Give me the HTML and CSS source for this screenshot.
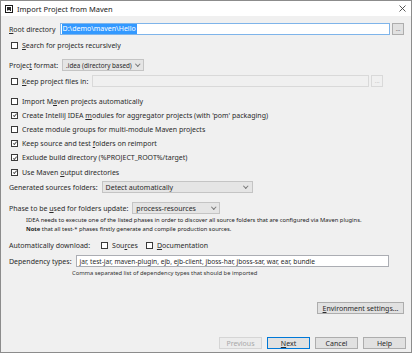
FILE: index.html
```html
<!DOCTYPE html>
<html>
<head>
  <meta charset="UTF-8">
  <title>Import Project from Maven</title>
  <link rel="stylesheet" href="styles.css">
</head>
<body>
  <div class="dialog">
    <div class="titlebar">
      <svg class="app-icon" width="8" height="8" viewBox="0 0 8 8">
        <rect x="0" y="0" width="8" height="8" fill="#1a1a1a"/>
        <rect x="1" y="1" width="6" height="6" fill="#fff"/>
        <rect x="2" y="2" width="4" height="4" fill="#2b2b2b"/>
        <rect x="2.5" y="5" width="2.5" height="0.8" fill="#fff"/>
      </svg>
      <span class="title">Import Project from Maven</span>
      <svg class="close" width="7" height="7" viewBox="0 0 7 7">
        <path d="M0.5 0.5 L6.5 6.5 M6.5 0.5 L0.5 6.5" stroke="#444" stroke-width="0.9"/>
      </svg>
    </div>

    <div class="content">
      <div class="row r-root">
        <span class="label"><u>R</u>oot directory</span>
        <div class="input focus"><span class="sel">D:\demo\maven\Hello</span></div>
        <div class="browse">...</div>
      </div>

      <div class="row r-search">
        <span class="cb"></span><span><u>S</u>earch for projects recursively</span>
      </div>

      <div class="row r-format">
        <span class="label">Projec<u>t</u> format:</span>
        <div class="select fmt">.idea (directory based)<span class="arrow"></span></div>
      </div>

      <div class="row r-keep">
        <span class="cb"></span><span><u>K</u>eep project files in:</span>
        <div class="input disabled keep-in"></div>
        <div class="browse disabled">...</div>
      </div>

      <div class="checks">
        <div class="row"><span class="cb"></span><span>Import M<u>a</u>ven projects automatically</span></div>
        <div class="row"><span class="cb on"></span><span>Create IntelliJ IDEA <u>m</u>odules for aggregator projects (with 'pom' packaging)</span></div>
        <div class="row"><span class="cb"></span><span>Create module groups for multi-module Maven projects</span></div>
        <div class="row"><span class="cb on"></span><span>Keep source and test <u>f</u>olders on reimport</span></div>
        <div class="row"><span class="cb on"></span><span>Exclude build directory (%PROJECT_ROOT%/target)</span></div>
        <div class="row"><span class="cb on"></span><span>Use Maven <u>o</u>utput directories</span></div>
      </div>

      <div class="row r-gen">
        <span class="label">Generated sources folders:</span>
        <div class="select gen">Detect automatically<span class="arrow"></span></div>
      </div>

      <div class="row r-phase">
        <span class="label">Phase to be <u>u</u>sed for folders update:</span>
        <div class="select phase">process-resources<span class="arrow"></span></div>
      </div>

      <div class="hint">
        <div>IDEA needs to execute one of the listed phases in order to discover all source folders that are configured via Maven plugins.</div>
        <div><b>Note</b> that all test-* phases firstly generate and compile production sources.</div>
      </div>

      <div class="row r-auto">
        <span class="label">Automatically download:</span>
        <span class="cb"></span><span class="opt">Sou<u>r</u>ces</span>
        <span class="cb"></span><span><u>D</u>ocumentation</span>
      </div>

      <div class="row r-dep">
        <span class="label">Dependency types:</span>
        <div class="input dep">jar, test-jar, maven-plugin, ejb, ejb-client, jboss-har, jboss-sar, war, ear, bundle</div>
      </div>

      <div class="dep-hint">Comma separated list of dependency types that should be imported</div>

      <div class="env-row">
        <div class="btn env"><u>E</u>nvironment settings...</div>
      </div>
    </div>

    <div class="footer">
      <div class="btn disabled">Previous</div>
      <div class="btn default"><u>N</u>ext</div>
      <div class="btn">Cancel</div>
      <div class="btn">Help</div>
    </div>
  </div>
</body>
</html>
```

FILE: styles.css
```css
html, body {
  margin: 0;
  padding: 0;
}
body {
  width: 413px;
  height: 354px;
  background: #ffffff;
  font-family: 'Noto Sans', 'Open Sans', sans-serif;
  font-size: 7px;
  color: #2a2a2a;
  overflow: hidden;
}
u {
  text-decoration: underline;
  text-underline-offset: 1px;
  text-decoration-thickness: 0.6px;
}
.dialog {
  box-sizing: border-box;
  width: 412px;
  height: 353px;
  border: 1px solid #8c8c8c;
  background: #f0f0f0;
  display: flex;
  flex-direction: column;
}
.titlebar {
  height: 15px;
  background: #ffffff;
  display: flex;
  align-items: center;
  padding: 0 5px 0 4px;
}
.app-icon {
  margin-right: 4px;
}
.title {
  font-size: 7.5px;
  color: #222;
  flex: 1;
}
.content {
  flex: 1;
  padding: 6px 7px 0 8px;
  display: flex;
  flex-direction: column;
}
.row {
  display: flex;
  align-items: center;
  height: 14px;
  white-space: nowrap;
}
.label {
  margin-right: 4px;
}
.cb {
  box-sizing: border-box;
  width: 7px;
  height: 7px;
  border: 1px solid #3a3a3a;
  background: #fff;
  margin: 0 4px 0 2px;
  flex: none;
  position: relative;
}
.cb.on::after {
  content: '';
  position: absolute;
  left: 1.6px;
  top: 0.2px;
  width: 1.3px;
  height: 2.8px;
  border: solid #555;
  border-width: 0 0.8px 0.8px 0;
  transform: rotate(40deg);
}
.input {
  box-sizing: border-box;
  height: 12px;
  background: #fff;
  border: 1px solid #abadb3;
  display: flex;
  align-items: center;
  padding: 0 1px;
  overflow: hidden;
}
.input.focus {
  border-color: #7eb4ea;
  width: 334px;
}
.input.disabled {
  background: #f0f0f0;
  border-color: #d9d9d9;
}
.sel {
  background: #3399ff;
  color: #fff;
  padding: 0 1px;
  line-height: 10px;
}
.browse {
  box-sizing: border-box;
  width: 12px;
  height: 12px;
  margin-left: 2px;
  background: #e1e1e1;
  border: 1px solid #adadad;
  color: #555;
  font-size: 6px;
  display: flex;
  align-items: center;
  justify-content: center;
  line-height: 1;
}
.browse.disabled {
  background: #f0f0f0;
  border-color: #d9d9d9;
  color: #bbb;
}
.select {
  box-sizing: border-box;
  height: 12px;
  background: #e5e5e5;
  border: 1px solid #c4c4c4;
  display: flex;
  align-items: center;
  padding: 0 4px 0 3px;
}
.arrow {
  margin-left: auto;
  width: 2.5px;
  height: 2.5px;
  border: solid #777;
  border-width: 0 0.8px 0.8px 0;
  transform: rotate(45deg);
  margin-top: -2px;
  flex: none;
}
.r-search {
  margin-top: 2px;
}
.r-format {
  margin-top: 6px;
}
.fmt {
  width: 82px;
  font-size: 6.3px;
}
.r-keep {
  margin-top: 2px;
}
.keep-in {
  width: 277px;
  margin-left: 4px;
}
.checks {
  margin-top: 6px;
}
.checks .row {
  height: 14.2px;
}
.r-gen {
  margin-top: 1px;
}
.r-gen .gen {
  width: 151px;
}
.r-phase {
  margin-top: 7px;
}
.phase {
  width: 88px;
}
.hint {
  font-size: 5.8px;
  line-height: 9px;
  margin: 1px 0 0 17px;
  color: #222;
}
.r-auto {
  margin-top: 4px;
}
.r-auto .label {
  margin-right: 9px;
}
.opt {
  margin-right: 6px;
}
.r-dep {
  margin-top: 2px;
}
.dep {
  width: 313px;
  padding: 0 3px;
  font-size: 6.6px;
}
.dep-hint {
  font-size: 5.8px;
  line-height: 8px;
  margin: 1px 0 0 63px;
  color: #333;
}
.env-row {
  display: flex;
  justify-content: flex-end;
  margin-top: 25px;
}
.btn {
  box-sizing: border-box;
  height: 12px;
  width: 43px;
  background: #e1e1e1;
  border: 1px solid #adadad;
  display: flex;
  align-items: center;
  justify-content: center;
  white-space: nowrap;
}
.btn.env {
  width: 87px;
}
.btn.default {
  border: 1px solid #0078d7;
}
.btn.disabled {
  background: #ececec;
  border-color: #d5d5d5;
  color: #a8a8a8;
}
.footer {
  display: flex;
  justify-content: flex-end;
  gap: 5px;
  padding: 0 5px 3px 0;
}
```
